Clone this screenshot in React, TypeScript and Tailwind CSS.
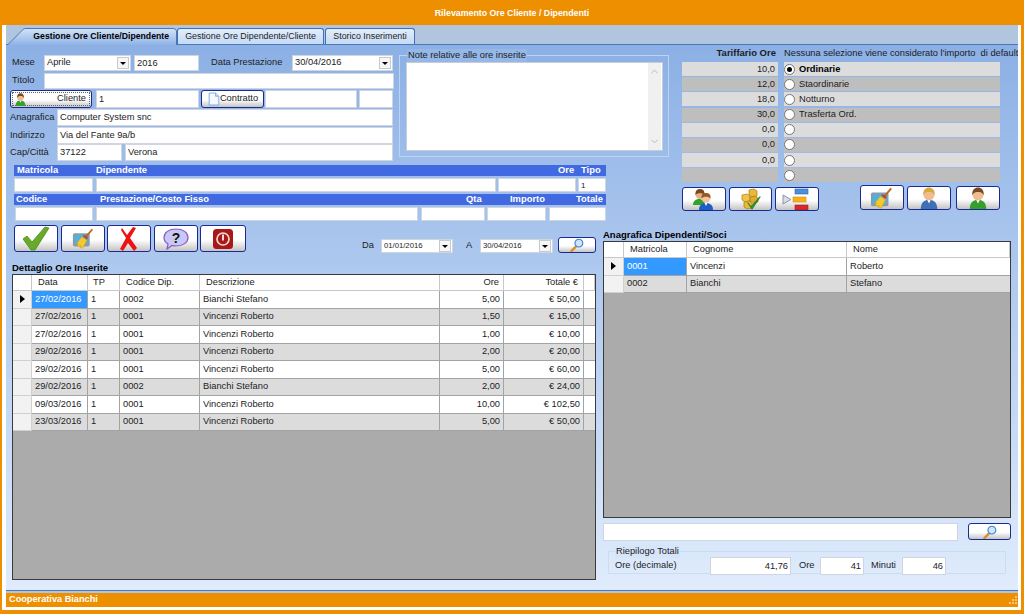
import type { ReactNode } from 'react';
import { ChevronUp, ChevronDown } from 'lucide-react';

function Field({ className = '', children, right }: { className?: string; children?: ReactNode; right?: boolean }) {
  return (
    <div className={`${className} shrink-0 h-full flex items-center bg-white border border-[#cfd6e2] px-[2px] pt-px text-[9.3px] text-[#1c1c24] overflow-hidden whitespace-nowrap ${right ? 'justify-end' : ''}`}>
      {children}
    </div>
  );
}

function Combo({ className = '', children, small }: { className?: string; children: ReactNode; small?: boolean }) {
  return (
    <div className={`${className} shrink-0 h-full flex items-center justify-between bg-white border border-[#cfd6e2] pl-[2px] pr-[1px] overflow-hidden ${small ? 'text-[7.7px]' : 'text-[9.3px]'} text-[#1c1c24]`}>
      <span>{children}</span>
      <span className="w-[12px] h-[12px] flex items-center justify-center bg-[#f6f6f6] border border-[#c9c9c9]">
        <span className="w-0 h-0 border-x-[3px] border-x-transparent border-t-[3px] border-t-black" />
      </span>
    </div>
  );
}

function Btn({ className = '', children }: { className?: string; children?: ReactNode }) {
  return (
    <div className={`${className} shrink-0 flex items-center justify-center rounded-[3px] border border-[#1b2a8f] bg-gradient-to-b from-white from-55% to-[#c4c4c4]`}>
      {children}
    </div>
  );
}

function Person({ size = 18, shirt = '#35a02c', hair = '#7a4a1e' }: { size?: number; shirt?: string; hair?: string }) {
  return (
    <svg width={size} height={size} viewBox="0 0 24 24">
      <path d="M3 24c0-6 3-10 9-10s9 4 9 10z" fill={shirt} />
      <path d="M10 14l2 4 2-4z" fill="#fff" />
      <circle cx="12" cy="8.500" r="6" fill="#f0bd92" />
      <path d="M5.800 9C5 3 9 .5 12 .5S19 3 18.200 9C17 6 14 5.500 12 5.500S7 6 5.800 9z" fill={hair} />
    </svg>
  );
}

function Users() {
  return (
    <svg width="24" height="22" viewBox="0 0 24 22">
      <path d="M1 17c0-4 3-6 6-6s6 2 6 6z" fill="#35a02c" />
      <circle cx="8" cy="6.500" r="4.500" fill="#e7b088" />
      <path d="M3.500 7C3 2.500 5.500 1 8 1s5 1.500 4.500 6C11 4.500 5 4.500 3.500 7z" fill="#7a4a1e" />
      <path d="M7 22c0-5 3-7 7-7s7 2 7 7z" fill="#1f5fc4" />
      <path d="M12.500 15l1.500 3 1.500-3z" fill="#fff" />
      <circle cx="14" cy="10" r="4.500" fill="#f3c39c" />
      <path d="M9.500 10.500C9 6 11.500 5 14 5s5 1 4.500 5.500C17 8 11 8 9.500 10.500z" fill="#96591f" />
    </svg>
  );
}

function Boxes() {
  return (
    <svg width="22" height="22" viewBox="0 0 22 22">
      <path d="M9 2l5-1 3 2v5l-5 1-3-2z" fill="#eab93a" stroke="#a87a18" strokeWidth="0.7" />
      <path d="M2 7l5-1 3 2v5l-5 1-3-2z" fill="#efc44b" stroke="#a87a18" strokeWidth="0.7" />
      <path d="M10 9l5-1 3 2v4l-5 1-3-2z" fill="#e3a92b" stroke="#a87a18" strokeWidth="0.7" />
      <path d="M4 14l5-1 3 2v5l-5 1-3-2z" fill="#eab93a" stroke="#a87a18" strokeWidth="0.7" />
      <path d="M8 15l3 4 9-10-8 12z" fill="#3aa52e" stroke="#2c8a22" strokeWidth="1.200" strokeLinejoin="round" />
    </svg>
  );
}

function Flow() {
  return (
    <svg width="30" height="22" viewBox="0 0 30 22">
      <path d="M1 7l8 4.500-8 4.500z" fill="#d9dce6" stroke="#8d93a8" />
      <rect x="13" y="1" width="13" height="5" fill="#4a8fe0" stroke="#2f66b3" strokeWidth="0.6" />
      <rect x="11" y="9" width="13" height="5" fill="#f6b21c" stroke="#d08c0c" strokeWidth="0.6" />
      <rect x="13" y="17" width="13" height="5" fill="#d42a2a" stroke="#a81b1b" strokeWidth="0.6" />
    </svg>
  );
}

function Broom({ size = 24 }: { size?: number }) {
  return (
    <svg width={size} height={size} viewBox="0 0 26 24">
      <rect x="1" y="6" width="19" height="15" rx="2" fill="#8f99a6" />
      <rect x="3" y="8" width="15" height="10" fill="#49b3e8" />
      <path d="M15 11L23 1.500" stroke="#b8661c" strokeWidth="2" />
      <path d="M11 10l6 4-5 9-3-1 1-2-3 1-1-1 1-2-2 0z" fill="#f3c92e" stroke="#c99a13" strokeWidth="0.6" />
      <path d="M12 9l5 4 1-2-4-3z" fill="#c9392b" />
    </svg>
  );
}

function Check() {
  return (
    <svg width="30" height="25" viewBox="0 0 30 25">
      <path d="M2 13l4-3 5 6L24 1l4 1-14 22h-4z" fill="#6aaa2a" stroke="#4b8a1c" strokeWidth="0.8" strokeLinejoin="round" />
    </svg>
  );
}

function RedX() {
  return (
    <svg width="20" height="24" viewBox="0 0 20 24">
      <path d="M3 1l5 7 6-8 3 1-6 10 7 10-3 3-6-8-5 8-3-2 6-11-5-8z" fill="#ee1111" />
    </svg>
  );
}

function Help() {
  return (
    <svg width="26" height="22" viewBox="0 0 26 22">
      <path d="M13 1c7 0 12 3.500 12 8.500S20 18 13 18c-1.500 0-2.500 0-4-.5L4 21l1-5c-2.500-1.500-4-4-4-6.500C1 4.500 6 1 13 1z" fill="#c8c8f5" stroke="#8a55c9" strokeWidth="1.200" />
      <text x="13" y="15" fontSize="14" fontWeight="700" textAnchor="middle" fontFamily="Liberation Sans, sans-serif" fill="#111">?</text>
    </svg>
  );
}

function Power() {
  return (
    <svg width="22" height="22" viewBox="0 0 22 22">
      <rect x="1" y="1" width="20" height="20" rx="3.500" fill="#a91717" />
      <circle cx="11" cy="11" r="6" fill="none" stroke="#f6d8d8" strokeWidth="1.700" />
      <path d="M11 6.500v6" stroke="#f6d8d8" strokeWidth="2" />
    </svg>
  );
}

function Lens() {
  return (
    <svg width="16" height="14" viewBox="0 0 16 15">
      <path d="M2 14l5-5" stroke="#d8912a" strokeWidth="2.500" strokeLinecap="round" />
      <circle cx="10" cy="5.500" r="4.200" fill="#cfe5fb" stroke="#3f82d3" strokeWidth="1.200" />
    </svg>
  );
}

function Doc() {
  return (
    <svg width="12" height="14" viewBox="0 0 15 16">
      <path d="M1.500.5h8l4 4v11h-12z" fill="#f4f8ff" stroke="#6d9bd8" />
      <path d="M9.500.5v4h4" fill="#cfe0f7" stroke="#6d9bd8" />
    </svg>
  );
}

function RowArrow() {
  return <span className="w-0 h-0 border-y-[4px] border-y-transparent border-l-[5px] border-l-black" />;
}

const ORE = [
  ['27/02/2016', '1', '0002', 'Bianchi Stefano', '5,00', '€ 50,00'],
  ['27/02/2016', '1', '0001', 'Vincenzi Roberto', '1,50', '€ 15,00'],
  ['27/02/2016', '1', '0001', 'Vincenzi Roberto', '1,00', '€ 10,00'],
  ['29/02/2016', '1', '0001', 'Vincenzi Roberto', '2,00', '€ 20,00'],
  ['29/02/2016', '1', '0001', 'Vincenzi Roberto', '5,00', '€ 60,00'],
  ['29/02/2016', '1', '0002', 'Bianchi Stefano', '2,00', '€ 24,00'],
  ['09/03/2016', '1', '0001', 'Vincenzi Roberto', '10,00', '€ 102,50'],
  ['23/03/2016', '1', '0001', 'Vincenzi Roberto', '5,00', '€ 50,00'],
];

const TARIFFE = [
  ['10,0', 'Ordinarie'],
  ['12,0', 'Staordinarie'],
  ['18,0', 'Notturno'],
  ['30,0', 'Trasferta Ord.'],
  ['0,0', ''],
  ['0,0', ''],
  ['0,0', ''],
  ['', ''],
];

const cell = 'h-full flex items-center border-r border-b border-[#a3a3a3] px-[3px] pt-px text-[9.3px] text-[#1c1c24] whitespace-nowrap overflow-hidden';
const head = 'h-full flex items-center border-r border-b border-[#c8c8c8] bg-white pt-px text-[9.3px] text-[#1c1c24] whitespace-nowrap';

function DettaglioGrid() {
  return (
    <div className="w-[584px] h-[306px] border border-[#3a3a3a] bg-[#ababab] overflow-hidden">
      <div className="h-[16px] grid grid-cols-[19px_56px_32px_80px_240px_64px_80px_1fr]">
        <div className={head} />
        <div className={`${head} pl-[6px]`}>Data</div>
        <div className={`${head} pl-[5px]`}>TP</div>
        <div className={`${head} pl-[6px]`}>Codice Dip.</div>
        <div className={`${head} pl-[6px]`}>Descrizione</div>
        <div className={`${head} justify-end pr-[4px]`}>Ore</div>
        <div className={`${head} justify-end pr-[5px]`}>Totale €</div>
        <div className={head} />
      </div>
      {ORE.map((r, i) => (
        <div key={i} className={`h-[17.500px] grid grid-cols-[19px_56px_32px_80px_240px_64px_80px_1fr] ${i % 2 ? 'bg-[#dcdcdc]' : 'bg-white'}`}>
          <div className="h-full flex items-center justify-center bg-[#f2f2f2] border-r border-b border-[#d0d0d0]">
            {i === 0 && <RowArrow />}
          </div>
          <div className={`${cell} ${i === 0 ? 'bg-[#3399ff] text-white' : ''}`}>{r[0]}</div>
          <div className={cell}>{r[1]}</div>
          <div className={cell}>{r[2]}</div>
          <div className={cell}>{r[3]}</div>
          <div className={`${cell} justify-end`}>{r[4]}</div>
          <div className={`${cell} justify-end`}>{r[5]}</div>
          <div className="h-full border-b border-[#a3a3a3]" />
        </div>
      ))}
    </div>
  );
}

function DipendentiGrid() {
  const rows = [
    ['0001', 'Vincenzi', 'Roberto'],
    ['0002', 'Bianchi', 'Stefano'],
  ];
  return (
    <div className="w-[408px] h-[277px] border border-[#3a3a3a] bg-[#ababab] overflow-hidden">
      <div className="h-[16px] grid grid-cols-[20px_63px_160px_1fr]">
        <div className={head} />
        <div className={`${head} pl-[6px]`}>Matricola</div>
        <div className={`${head} pl-[6px]`}>Cognome</div>
        <div className={`${head} pl-[6px]`}>Nome</div>
      </div>
      {rows.map((r, i) => (
        <div key={r[0]} className={`h-[17.500px] grid grid-cols-[20px_63px_160px_1fr] ${i % 2 ? 'bg-[#dcdcdc]' : 'bg-white'}`}>
          <div className="h-full flex items-center justify-center bg-[#f2f2f2] border-r border-b border-[#d0d0d0]">
            {i === 0 && <RowArrow />}
          </div>
          <div className={`${cell} ${i === 0 ? 'bg-[#3399ff] text-white' : ''}`}>{r[0]}</div>
          <div className={cell}>{r[1]}</div>
          <div className={`${cell} border-r-0`}>{r[2]}</div>
        </div>
      ))}
    </div>
  );
}

function Form() {
  return (
    <div className="w-[384px] shrink-0 text-[9.3px] text-[#1c1c24]">
      <div className="h-[16px] flex items-center">
        <span className="w-[34px] pl-[2px] shrink-0">Mese</span>
        <Combo className="w-[87px]">Aprile</Combo>
        <Field className="w-[65px] ml-[3px]">2016</Field>
        <span className="ml-[12px] w-[81px] shrink-0 whitespace-nowrap">Data Prestazione</span>
        <Combo className="w-[101px]">30/04/2016</Combo>
      </div>
      <div className="h-[16px] mt-[2px] flex items-center">
        <span className="w-[34px] pl-[2px] shrink-0">Titolo</span>
        <Field className="w-[350px]" />
      </div>
      <div className="h-[18px] mt-[1px] flex items-center">
        <Btn className="w-[82px] h-full p-px">
          <div className="w-full h-full border border-dotted border-[#666] flex items-center justify-between pl-[1px] pr-[3px]">
            <Person size={13} />
            <span>Cliente</span>
          </div>
        </Btn>
        <Field className="w-[103px] ml-[4px]">1</Field>
        <Btn className="w-[63px] h-full ml-[2px] justify-between pl-[4px] pr-[3px]">
          <Doc />
          <span>Contratto</span>
        </Btn>
        <Field className="w-[92px] ml-[1px]" />
        <Field className="w-[34px] ml-[2px]" />
      </div>
      <div className="h-[17px] mt-[1px] flex items-center">
        <span className="w-[47px] shrink-0">Anagrafica</span>
        <Field className="w-[336px]">Computer System snc</Field>
      </div>
      <div className="h-[17px] mt-[1px] flex items-center">
        <span className="w-[47px] shrink-0">Indirizzo</span>
        <Field className="w-[336px]">Via del Fante 9a/b</Field>
      </div>
      <div className="h-[17px] flex items-center">
        <span className="w-[47px] shrink-0">Cap/Città</span>
        <Field className="w-[65px]">37122</Field>
        <Field className="w-[268px] ml-[3px]">Verona</Field>
      </div>
    </div>
  );
}

function Notes() {
  return (
    <div className="relative w-[270px] h-[102px] ml-[5px] shrink-0 border border-[#bcd3f2] pl-[6px] pt-[6px]">
      <span className="absolute left-[7px] top-[-7px] px-[1px] bg-[#95b8e9] text-[9.3px] text-[#1c1c24] leading-[13px] whitespace-nowrap">Note relative alle ore inserite</span>
      <div className="w-[257px] h-[89px] bg-white border border-[#c8ccd4] flex justify-end pr-[1px]">
        <div className="w-[13px] h-full bg-[#f0f0f0] flex flex-col items-center justify-between py-[3px] text-[#b5b5b5]">
          <ChevronUp size={11} />
          <ChevronDown size={11} />
        </div>
      </div>
    </div>
  );
}

function Bands() {
  return (
    <div className="w-[592px] ml-[4px] mt-[2px]">
      <div className="h-[11px] bg-[#4169e1] flex items-center text-[9.4px] font-bold text-white whitespace-nowrap">
        <span className="w-[82px] pl-[3px]">Matricola</span>
        <span className="w-[462px]">Dipendente</span>
        <span className="w-[23px]">Ore</span>
        <span>Tipo</span>
      </div>
      <div className="h-[14px] mt-[2px] flex">
        <Field className="w-[79px]" />
        <Field className="w-[400px] ml-[3px]" />
        <Field className="w-[78px] ml-[2px]" />
        <Field className="w-[28px] ml-[2px] !text-[8px]">1</Field>
      </div>
      <div className="h-[11px] mt-[2px] bg-[#4169e1] flex items-center text-[9.4px] font-bold text-white whitespace-nowrap">
        <span className="w-[86px] pl-[2px]">Codice</span>
        <span className="w-[366px]">Prestazione/Costo Fisso</span>
        <span className="w-[44px]">Qta</span>
        <span className="w-[66px]">Importo</span>
        <span>Totale</span>
      </div>
      <div className="h-[14px] mt-[2px] flex pl-[1px]">
        <Field className="w-[78px]" />
        <Field className="w-[322px] ml-[3px]" />
        <Field className="w-[64px] ml-[3px]" />
        <Field className="w-[59px] ml-[2px]" />
        <Field className="w-[57px] ml-[3px]" />
      </div>
    </div>
  );
}

function Tariffario() {
  return (
    <div className="ml-[13px] pt-[2px] flex-1 min-w-0 text-[9.3px] text-[#1c1c24]">
      <div className="h-[13px] flex items-center whitespace-nowrap">
        <span className="w-[94px] text-right font-bold text-[9.5px] shrink-0">Tariffario Ore</span>
        <span className="ml-[8px] whitespace-pre">Nessuna selezione viene considerato l'importo  di default</span>
      </div>
      <div className="mt-[2px] flex flex-col gap-[1.200px]">
        {TARIFFE.map(([val, name], i) => (
          <div key={i} className="h-[14px] flex">
            <div className={`w-[96px] flex items-center justify-end pr-[3px] pt-px ${i % 2 ? 'bg-[#bebebe]' : 'bg-[#dcdcdc]'}`}>{val}</div>
            <div className={`w-[216px] ml-[6px] flex items-center ${i % 2 ? 'bg-[#bebebe]' : 'bg-[#dcdcdc]'} ${i === 0 ? 'font-bold text-black' : ''}`}>
              <span className="w-[11px] h-[11px] rounded-full bg-white border border-[#777] flex items-center justify-center shrink-0">
                {i === 0 && <span className="w-[5px] h-[5px] rounded-full bg-black" />}
              </span>
              <span className="ml-[4px] pt-px">{name}</span>
            </div>
          </div>
        ))}
      </div>
      <div className="mt-[3px] h-[27px] flex items-start">
        <Btn className="w-[44px] h-[24px] mt-[2px]"><Users /></Btn>
        <Btn className="w-[43px] h-[24px] mt-[2px] ml-[3px]"><Boxes /></Btn>
        <Btn className="w-[44px] h-[24px] mt-[2px] ml-[3px]"><Flow /></Btn>
        <Btn className="w-[44px] h-[25px] ml-[41px]"><Broom /></Btn>
        <Btn className="w-[44px] h-[24px] mt-[1px] ml-[3px]"><Person size={22} shirt="#3f6fb5" hair="#d9a93c" /></Btn>
        <Btn className="w-[44px] h-[24px] mt-[1px] ml-[5px]"><Person size={22} /></Btn>
      </div>
    </div>
  );
}

function Toolbar() {
  return (
    <div className="h-[28px] flex items-start text-[9.3px] text-[#1c1c24]">
      <Btn className="w-[44px] h-[27px] ml-[2px]"><Check /></Btn>
      <Btn className="w-[44px] h-[27px] ml-[3px]"><Broom size={23} /></Btn>
      <Btn className="w-[44px] h-[27px] ml-[2px]"><RedX /></Btn>
      <Btn className="w-[44px] h-[27px] ml-[3px]"><Help /></Btn>
      <Btn className="w-[46px] h-[27px] ml-[2px]"><Power /></Btn>
      <div className="h-[14px] mt-[14px] ml-[116px] flex items-center">
        <span className="w-[19px] shrink-0">Da</span>
        <Combo className="w-[72px]" small>01/01/2016</Combo>
        <span className="ml-[13px] w-[14px] shrink-0">A</span>
        <Combo className="w-[73px]" small>30/04/2016</Combo>
      </div>
      <Btn className="w-[38px] h-[16px] mt-[12px] ml-[5px]"><Lens /></Btn>
    </div>
  );
}

function Riepilogo() {
  return (
    <div className="relative w-[398px] h-[23px] mt-[10px] ml-[5px] border border-[#cfdcef] flex items-center pl-[6px] pt-[6px] text-[9.3px] text-[#1c1c24] whitespace-nowrap">
      <span className="absolute left-[6px] top-[-7px] px-[1px] bg-[#d7e5fa] leading-[13px]">Riepilogo Totali</span>
      <span className="w-[95px] shrink-0">Ore (decimale)</span>
      <div className="h-[18px] -mb-[1px] flex items-center">
        <Field className="w-[81px]" right>41,76</Field>
        <span className="ml-[8px] w-[21px] shrink-0">Ore</span>
        <Field className="w-[44px]" right>41</Field>
        <span className="ml-[7px] w-[31px] shrink-0">Minuti</span>
        <Field className="w-[44px]" right>46</Field>
      </div>
    </div>
  );
}

export default function App() {
  return (
    <div className="w-[1024px] h-[614px] flex flex-col bg-[#ee8f00] font-['Liberation_Sans',sans-serif] overflow-hidden">
      <div className="h-[25px] shrink-0 flex items-center justify-center pt-[3px] text-[8.8px] font-bold text-white">
        Rilevamento Ore Cliente / Dipendenti
      </div>
      <div className="flex-1 min-h-0 ml-[2px] mr-[3px] mb-[4px] bg-white pl-[4px] pr-[3px] pb-[3px]">
        <div className="h-full flex flex-col">
          <div className="h-[20px] shrink-0 bg-[#b1c5de] border-b border-[#4a78bd] flex items-end pl-[1px] text-[8.9px] text-[#1c1c24]">
            <div className="relative w-[170px] h-[17px] flex items-center justify-end pr-[8px] text-[8.7px] font-bold text-black whitespace-nowrap -mb-px">
              <svg className="absolute inset-0" width="170" height="17" viewBox="0 0 170 17">
                <defs>
                  <linearGradient id="t" x1="0" y1="0" x2="0" y2="1">
                    <stop offset="0" stopColor="#d4e3f8" />
                    <stop offset="1" stopColor="#8fb3e6" />
                  </linearGradient>
                </defs>
                <path d="M0.500 17L16 1.500Q17 .5 19 .5H166Q169 .5 169.500 3V17" fill="url(#t)" stroke="#4a78bd" />
              </svg>
              <span className="relative">Gestione Ore Cliente/Dipendente</span>
            </div>
            <div className="w-[147px] h-[16px] flex items-center justify-center rounded-t-[3px] border border-b-0 border-[#3f6fb5] bg-gradient-to-b from-[#e2edfb] to-[#c6daf5] whitespace-nowrap">
              Gestione Ore Dipendente/Cliente
            </div>
            <div className="w-[90px] h-[16px] ml-[1px] flex items-center justify-center rounded-t-[3px] border border-b-0 border-[#3f6fb5] bg-gradient-to-b from-[#e2edfb] to-[#c6daf5] whitespace-nowrap">
              Storico Inserimenti
            </div>
          </div>

          <div className="flex-1 min-h-0 overflow-hidden bg-gradient-to-b from-[#8cb0e5] to-[#e0ecfc]">
            <div className="h-[180px] flex pl-[4px]">
              <div className="w-[659px] shrink-0 pt-[10px]">
                <div className="h-[108px] flex items-start">
                  <Form />
                  <Notes />
                </div>
                <Bands />
              </div>
              <Tariffario />
            </div>
            <div className="flex pl-[6px]">
              <div className="w-[584px] shrink-0">
                <Toolbar />
                <div className="h-[21px] flex items-end pb-[2px] leading-none text-[9.5px] font-bold text-black">Dettaglio Ore Inserite</div>
                <DettaglioGrid />
              </div>
              <div className="w-[408px] ml-[7px] shrink-0">
                <div className="h-[16px] flex items-end pb-[2px] leading-none text-[9.5px] font-bold text-black">Anagrafica Dipendenti/Soci</div>
                <DipendentiGrid />
                <div className="h-[18px] mt-[5px] flex items-start">
                  <Field className="w-[355px] !h-[18px] border-[#c4c9d2]" />
                  <Btn className="w-[43px] h-[17px] ml-[10px]"><Lens /></Btn>
                </div>
                <Riepilogo />
              </div>
            </div>
          </div>

          <div className="h-[3px] shrink-0 bg-[#b1c5de] border-t border-[#4a78bd]" />
          <div className="h-[14px] shrink-0 bg-[#ee8f00] flex items-center justify-between pl-[3px] text-[9.2px] font-bold text-white">
            <span>Cooperativa Bianchi</span>
            <svg width="11" height="11" viewBox="0 0 11 11" fill="#f7c778">
              <rect x="8" y="1" width="2" height="2" />
              <rect x="5" y="4" width="2" height="2" />
              <rect x="8" y="4" width="2" height="2" />
              <rect x="2" y="7" width="2" height="2" />
              <rect x="5" y="7" width="2" height="2" />
              <rect x="8" y="7" width="2" height="2" />
            </svg>
          </div>
        </div>
      </div>
    </div>
  );
}
